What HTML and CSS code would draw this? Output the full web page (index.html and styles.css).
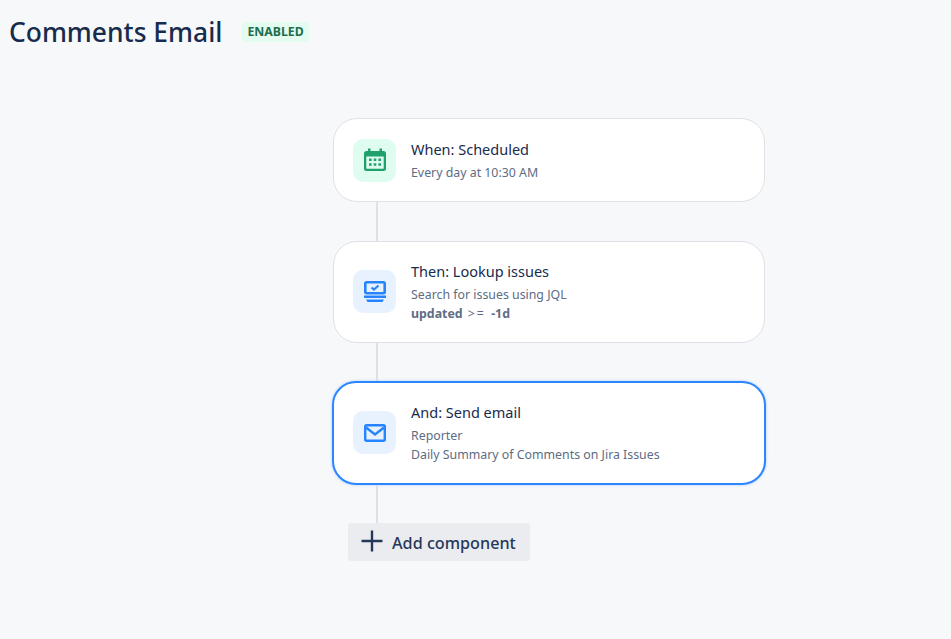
FILE: index.html
```html
<!DOCTYPE html>
<html lang="en">
<head>
  <meta charset="UTF-8">
  <title>Comments Email</title>
  <link rel="stylesheet" href="styles.css">
</head>
<body>
  <div class="header">
    <h1>Comments Email</h1>
    <span class="lozenge">ENABLED</span>
  </div>

  <div class="flow">
    <div class="card first">
      <div class="icon-box green">
        <svg width="24" height="24" viewBox="0 0 24 24">
          <path fill="#22a06b" fill-rule="evenodd" d="M5 .5h2.500V3h9V.5H19V3h1.500A2.500 2.500 0 0 1 23 5.500v15a2.500 2.500 0 0 1-2.500 2.500h-17A2.500 2.500 0 0 1 1 20.500v-15A2.500 2.500 0 0 1 3.500 3H5zM3.300 8.500v11.700c0 .3.200.500.500.500h16.400c.3 0 .500-.200.500-.500V8.500z"/>
          <path fill="#22a06b" d="M6 10.500h2.600v2.600H6zM10.700 10.500h2.600v2.600h-2.600zM15.400 10.500H18v2.600h-2.600zM6 15.200h2.600v2.600H6zM10.700 15.200h2.600v2.600h-2.600zM15.400 15.200H18v2.600h-2.600z"/>
        </svg>
      </div>
      <div class="card-text">
        <div class="card-title">When: Scheduled</div>
        <div class="card-desc">Every day at 10:30 AM</div>
      </div>
    </div>
    <div class="line"></div>

    <div class="card">
      <div class="icon-box blue">
        <svg width="24" height="24" viewBox="0 0 24 24">
          <rect x="2.300" y="2.300" width="19.400" height="10.900" rx="1.200" fill="none" stroke="#2684ff" stroke-width="2.600"/>
          <path fill="none" stroke="#2684ff" stroke-width="2.200" d="M8.500 7.500l2.500 2 4.500-4"/>
          <path fill="#2684ff" d="M1 15.500h22v2.400H1zM3 19.500h18l-1.500 2.500h-15z"/>
        </svg>
      </div>
      <div class="card-text">
        <div class="card-title">Then: Lookup issues</div>
        <div class="card-desc">Search for issues using JQL</div>
        <div class="card-desc"><b>updated</b> <span class="op">&gt;=</span> <b>-1d</b></div>
      </div>
    </div>
    <div class="line"></div>

    <div class="card selected">
      <div class="icon-box blue">
        <svg width="24" height="24" viewBox="0 0 24 24">
          <rect x="2.200" y="4.200" width="19.600" height="15.600" rx="1.500" fill="none" stroke="#2684ff" stroke-width="2.400"/>
          <path fill="none" stroke="#2684ff" stroke-width="2.400" d="M3 6.500l9 7 9-7"/>
        </svg>
      </div>
      <div class="card-text">
        <div class="card-title">And: Send email</div>
        <div class="card-desc">Reporter</div>
        <div class="card-desc">Daily Summary of Comments on Jira Issues</div>
      </div>
    </div>
    <div class="line last"></div>

    <button class="add-btn">
      <svg width="24" height="24" viewBox="0 0 24 24">
        <path fill="none" stroke="#253858" stroke-width="2.400" d="M12 1.500v21M1.500 12h21"/>
      </svg>
      <span class="add-label">Add component</span>
    </button>
  </div>
</body>
</html>
```

FILE: styles.css
```css
body {
  background-color: #f7f8fa;
  color: #172b4d;
  font-family: "Noto Sans", Arial, sans-serif;
  margin: 0;
}

.header {
  display: flex;
  align-items: center;
  height: 64px;
  padding-left: 9px;
}

h1 {
  font-size: 26.4px;
  font-weight: 500;
  line-height: 32px;
  margin: 0;
}

.lozenge {
  background: #e3fcef;
  color: #216e4e;
  font-size: 12.3px;
  font-weight: 700;
  line-height: 20px;
  border-radius: 4px;
  padding: 0 5px;
  margin-left: 20px;
}

.flow {
  display: flex;
  flex-direction: column;
  align-items: flex-start;
  width: 432px;
  margin: 54px 0 0 333px;
}

.card {
  display: flex;
  align-items: center;
  box-sizing: border-box;
  width: 100%;
  background: white;
  border: 1px solid #dfe1e6;
  border-radius: 24px;
  padding: 19px;
}

.card.first {
  min-height: 84px;
}

.card.selected {
  width: 434px;
  margin-left: -1px;
  border: 2px solid #2e86ff;
  box-shadow: 0 0 3px #a9ccff;
}

.icon-box {
  display: flex;
  align-items: center;
  justify-content: center;
  flex-shrink: 0;
  width: 43px;
  height: 43px;
  border-radius: 10px;
  margin-top: -1px;
  margin-right: 15px;
}

.first .icon-box {
  margin-top: 0;
}

.green { background: #dffcf0; }
.blue { background: #e8f2ff; }

.card-title {
  font-size: 14.500px;
  line-height: 21px;
  margin-bottom: 3px;
  color: #172b4d;
}

.card-desc {
  font-size: 12.350px;
  line-height: 19px;
  color: #5e6c84;
}

.op {
  letter-spacing: 2px;
  margin: 0 2px;
}

.line {
  width: 2px;
  height: 39px;
  background: #dfe1e6;
  margin-left: 43px;
}

.card + .line + .selected {
  margin-top: -1px;
}

.line.last {
  height: 38px;
}

.add-btn {
  display: flex;
  align-items: center;
  height: 38px;
  width: 182px;
  margin-left: 15px;
  padding: 0 0 0 12px;
  background: #ebecf0;
  border: 0;
  border-radius: 3px;
  color: #253858;
  font-family: inherit;
  font-size: 16.200px;
  font-weight: 500;
}

.add-btn svg {
  margin-top: -2px;
  margin-right: 8px;
}

.add-label {
  padding-top: 2px;
}
```
